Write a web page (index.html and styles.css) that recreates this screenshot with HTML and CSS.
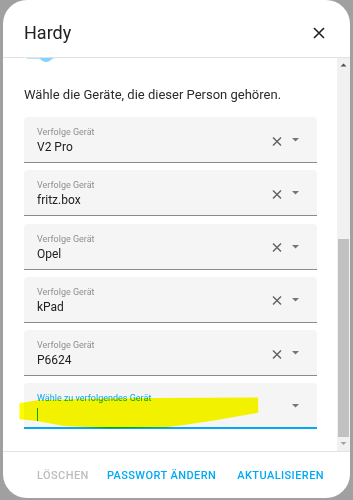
FILE: index.html
```html
<!DOCTYPE html>
<html>
<head>
<meta name="viewport" content="width=device-width, user-scalable=no">
<link rel="stylesheet" href="styles.css">
<title>Hardy</title>
</head>
<body>
<div class="dialog">
	<div class="header">
		<h2 class="title">Hardy</h2>
		<svg class="close" width="12" height="12" viewBox="0 0 12 12">
			<path d="M1 1L11 11M11 1L1 11" stroke="#212121" stroke-width="1.6" fill="none"/>
		</svg>
	</div>

	<div class="body">
		<div class="content">
			<div class="toggle"><span class="knob"></span></div>
			<p class="intro">Wähle die Geräte, die dieser Person gehören.</p>

			<div class="fields">
				<div class="field">
					<div class="text">
						<div class="label">Verfolge Gerät</div>
						<div class="value">V2 Pro</div>
					</div>
					<svg class="clear" width="10" height="9" viewBox="0 0 10 9"><path d="M1 0.5L9 8.5M9 0.5L1 8.5" stroke="#616161" stroke-width="1.4" fill="none"/></svg>
					<svg class="drop" width="7" height="4" viewBox="0 0 7 4"><path d="M0 0H7L3.5 3.5Z" fill="#757575"/></svg>
				</div>
				<div class="field">
					<div class="text">
						<div class="label">Verfolge Gerät</div>
						<div class="value">fritz.box</div>
					</div>
					<svg class="clear" width="10" height="9" viewBox="0 0 10 9"><path d="M1 0.5L9 8.5M9 0.5L1 8.5" stroke="#616161" stroke-width="1.4" fill="none"/></svg>
					<svg class="drop" width="7" height="4" viewBox="0 0 7 4"><path d="M0 0H7L3.5 3.5Z" fill="#757575"/></svg>
				</div>
				<div class="field">
					<div class="text">
						<div class="label">Verfolge Gerät</div>
						<div class="value">Opel</div>
					</div>
					<svg class="clear" width="10" height="9" viewBox="0 0 10 9"><path d="M1 0.5L9 8.5M9 0.5L1 8.5" stroke="#616161" stroke-width="1.4" fill="none"/></svg>
					<svg class="drop" width="7" height="4" viewBox="0 0 7 4"><path d="M0 0H7L3.5 3.5Z" fill="#757575"/></svg>
				</div>
				<div class="field">
					<div class="text">
						<div class="label">Verfolge Gerät</div>
						<div class="value">kPad</div>
					</div>
					<svg class="clear" width="10" height="9" viewBox="0 0 10 9"><path d="M1 0.5L9 8.5M9 0.5L1 8.5" stroke="#616161" stroke-width="1.4" fill="none"/></svg>
					<svg class="drop" width="7" height="4" viewBox="0 0 7 4"><path d="M0 0H7L3.5 3.5Z" fill="#757575"/></svg>
				</div>
				<div class="field">
					<div class="text">
						<div class="label">Verfolge Gerät</div>
						<div class="value">P6624</div>
					</div>
					<svg class="clear" width="10" height="9" viewBox="0 0 10 9"><path d="M1 0.5L9 8.5M9 0.5L1 8.5" stroke="#616161" stroke-width="1.4" fill="none"/></svg>
					<svg class="drop" width="7" height="4" viewBox="0 0 7 4"><path d="M0 0H7L3.5 3.5Z" fill="#757575"/></svg>
				</div>
				<div class="field focused">
					<div class="text">
						<div class="label">Wähle zu verfolgendes Gerät</div>
						<div class="value"><span class="caret"></span></div>
					</div>
					<svg class="drop" width="7" height="4" viewBox="0 0 7 4"><path d="M0 0H7L3.5 3.5Z" fill="#757575"/></svg>
					<!-- yellow marker scribble on top of the input -->
					<svg class="marker" width="240" height="48" viewBox="-5 0 240 48">
						<path d="M-4.5 20.3L13 17.2L60 16L126 15L234 14.6L234.3 29.7L193 37L160 42L143 44.3L86 45.3L40 43L13 38L-4.5 36.3Z" fill="#fcfc00"/>
					</svg>
				</div>
			</div>
		</div>

		<div class="scrollbar">
			<svg class="arrow" width="13" height="14" viewBox="0 0 13 14"><path d="M3.5 8.5H9.5L6.5 5.5Z" fill="#505050"/></svg>
			<div class="track"><div class="thumb"></div></div>
			<svg class="arrow" width="13" height="14" viewBox="0 0 13 14"><path d="M3.5 5H9.5L6.5 8Z" fill="#a3a3a3"/></svg>
		</div>
	</div>

	<div class="footer">
		<a class="btn muted">Löschen</a>
		<div class="actions">
			<a class="btn">Passwort ändern</a>
			<a class="btn">Aktualisieren</a>
		</div>
	</div>
</div>
</body>
</html>
```

FILE: styles.css
```css
* {
	box-sizing: border-box;
}
html {
	font-family: Roboto, "Liberation Sans", sans-serif;
}
body {
	margin: 0;
	height: 500px;
	overflow: hidden;
	background-color: #a0a0a0;
}
.dialog {
	margin-left: 3px;
	width: 347px;
	height: 498px;
	background-color: #ffffff;
	border-radius: 24px;
	display: flex;
	flex-direction: column;
	overflow: hidden;
}
.header {
	height: 58px;
	flex: none;
	display: flex;
	align-items: flex-start;
	justify-content: space-between;
	padding: 22px 25px 0 21px;
	border-bottom: 1px solid #e3e3e3;
}
.title {
	margin: 0;
	font-size: 18px;
	line-height: 22px;
	font-weight: 400;
	color: #212121;
}
.close {
	margin-top: 5px;
}

.body {
	flex: 1;
	display: flex;
	min-height: 0;
}
.content {
	flex: 1;
	overflow: hidden;
	padding: 0 20px 0 21px;
}
.toggle {
	height: 4px;
	width: 27px;
	margin-left: 3px;
	overflow: hidden;
	display: flex;
	justify-content: flex-end;
	background: linear-gradient(#b3e5fc 0 1.5px, transparent 1.5px);
}
.knob {
	flex: none;
	width: 14px;
	height: 14px;
	border-radius: 50%;
	background-color: #81d4fa;
	margin-top: -10px;
	margin-right: 1px;
}
.intro {
	margin: 25px 0 14px;
	font-size: 13px;
	line-height: 16px;
	color: #2b2b2b;
}
.fields {
	display: flex;
	flex-direction: column;
	gap: 7.25px;
}
.field {
	position: relative;
	height: 46px;
	display: flex;
	align-items: center;
	padding: 0 18px 0 13px;
	background-color: #f5f5f5;
	border-radius: 4px 4px 0 0;
	border-bottom: 1px solid #8a8a8a;
}
.field.focused {
	border-bottom: 2px solid #03a9f4;
}
.text {
	flex: 1;
	align-self: flex-start;
	padding-top: 10px;
}
.label {
	font-size: 9px;
	line-height: 11px;
	color: #8f8f8f;
	white-space: nowrap;
}
.focused .label {
	color: #03a9f4;
}
.value {
	margin-top: 2px;
	font-size: 12px;
	line-height: 15px;
	color: #212121;
	height: 15px;
}
.caret {
	display: inline-block;
	width: 1px;
	height: 13px;
	margin-top: 2px;
	background-color: #03a9f4;
}
.clear {
	flex: none;
	margin-top: 3px;
}
.drop {
	flex: none;
	margin-left: 10px;
	margin-top: 1px;
}
.marker {
	position: absolute;
	left: -5px;
	top: 0;
	mix-blend-mode: multiply;
}

.scrollbar {
	flex: none;
	width: 13px;
	display: flex;
	flex-direction: column;
	background-color: #f1f1f1;
}
.arrow {
	flex: none;
	display: block;
}
.track {
	flex: 1;
	display: flex;
	flex-direction: column;
	justify-content: flex-end;
}
.thumb {
	height: 198px;
	margin: 0 1px;
	background-color: #c1c1c1;
}

.footer {
	height: 47px;
	flex: none;
	display: flex;
	justify-content: space-between;
	align-items: flex-start;
	padding: 17px 26px 0 34px;
	border-top: 1px solid #e3e3e3;
}
.actions {
	display: flex;
	gap: 21px;
}
.btn {
	font-size: 11px;
	line-height: 14px;
	font-weight: 500;
	letter-spacing: 0.42px;
	text-transform: uppercase;
	color: #03a9f4;
	text-decoration: none;
}
.btn.muted {
	color: #bdbdbd;
}
```
